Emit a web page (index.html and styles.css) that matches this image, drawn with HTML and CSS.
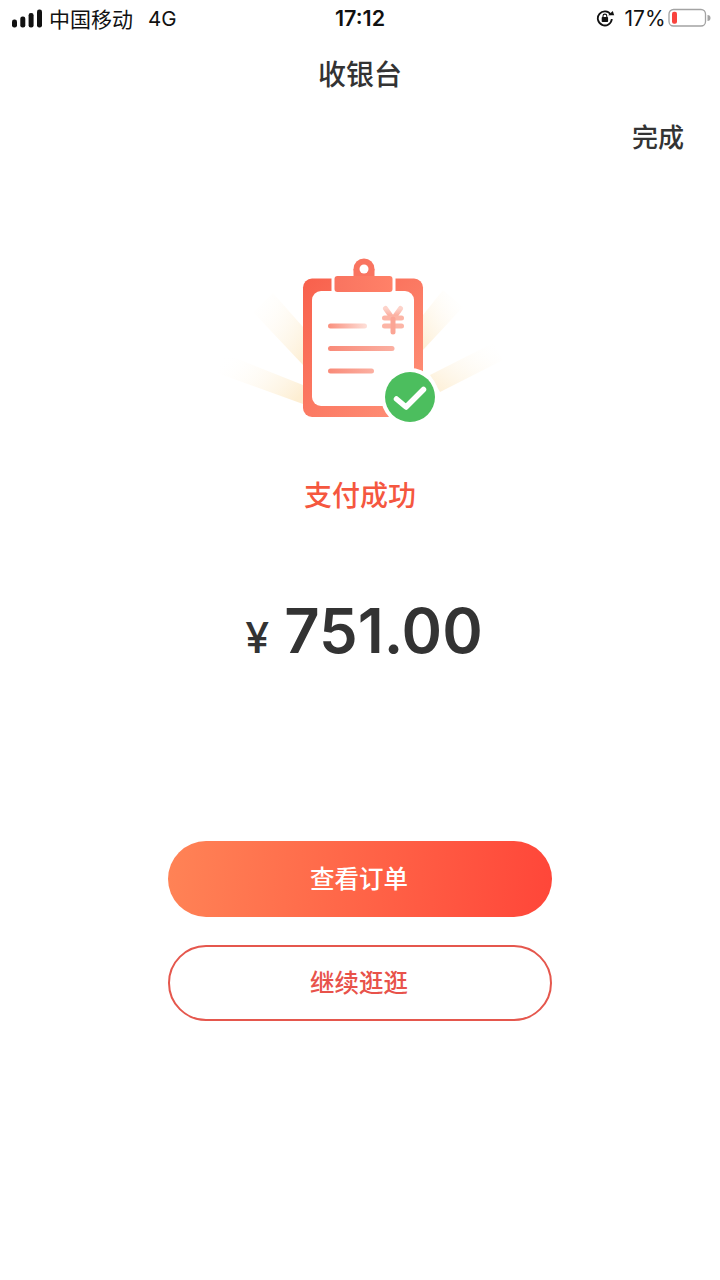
FILE: index.html
```html
<!DOCTYPE html>
<html lang="zh">
<head>
<meta charset="utf-8">
<title>收银台</title>
<link rel="stylesheet" href="styles.css">
</head>
<body>
<div class="page">
  <header class="status">
    <div class="status-left">
      <svg class="signal" width="30" height="19" viewBox="0 0 30 19"><rect x="0" y="10.500" width="5" height="8" rx="2.200"/><rect x="8.300" y="7.500" width="5" height="11" rx="2.200"/><rect x="16.600" y="4" width="5" height="14.500" rx="2.200"/><rect x="25" y="0.500" width="5" height="18" rx="2.200"/></svg>
      <span class="carrier">中国移动</span>
      <span class="net">4G</span>
    </div>
    <div class="status-time">17:12</div>
    <div class="status-right">
      <svg class="lock" width="19" height="18" viewBox="0 0 19 18"><path d="M14.800 5.800A7 7 0 1 0 15.800 10" fill="none" stroke="#111" stroke-width="1.800"/><path d="M12.200 6.300h6L16.800 2z" fill="#111"/><rect x="5.700" y="8" width="6.400" height="5" rx="0.800" fill="#111"/><path d="M7 8.500V7a1.900 1.900 0 0 1 3.800 0v1.500" fill="none" stroke="#111" stroke-width="1.100"/></svg>
      <span class="pct">17%</span>
      <svg class="battery" width="43" height="20" viewBox="0 0 43 20"><rect x="1" y="1.500" width="36.500" height="16.500" rx="4.500" fill="#fff" stroke="#a3a3a3" stroke-width="1.300"/><rect x="4" y="3.800" width="5" height="12" rx="2" fill="#f9433d"/><path d="M39.500 7a3 3 0 0 1 0 6z" fill="#a3a3a3"/></svg>
    </div>
  </header>

  <h1 class="title">收银台</h1>
  <div class="done-row"><span class="done">完成</span></div>

  <div class="illus">
    <svg width="300" height="180" viewBox="0 0 300 180">
      <defs>
        <linearGradient id="rayL1" x1="1" y1="0.800" x2="0" y2="0.200"><stop offset="0" stop-color="#fdeed2"/><stop offset="1" stop-color="#fff" stop-opacity="0"/></linearGradient>
        <linearGradient id="rayL2" x1="1" y1="1" x2="0" y2="0"><stop offset="0" stop-color="#fdeed2"/><stop offset="1" stop-color="#fff" stop-opacity="0"/></linearGradient>
        <linearGradient id="rayR1" x1="0" y1="1" x2="1" y2="0"><stop offset="0" stop-color="#fdeed2"/><stop offset="1" stop-color="#fff" stop-opacity="0"/></linearGradient>
        <linearGradient id="board" x1="0" y1="0" x2="1" y2="1"><stop offset="0" stop-color="#f8604c"/><stop offset="1" stop-color="#ff937a"/></linearGradient>
        <linearGradient id="clip" x1="0" y1="0" x2="1" y2="0"><stop offset="0" stop-color="#f97460"/><stop offset="1" stop-color="#ff8168"/></linearGradient>
        <linearGradient id="line1" x1="0" y1="0" x2="1" y2="0"><stop offset="0" stop-color="#fa8f7d"/><stop offset="1" stop-color="#fde0d9"/></linearGradient>
        <linearGradient id="line2" x1="0" y1="0" x2="1" y2="0"><stop offset="0" stop-color="#f98a78"/><stop offset="1" stop-color="#fbb0a2"/></linearGradient>
        <linearGradient id="yen" x1="0" y1="0" x2="0" y2="1"><stop offset="0" stop-color="#fdd3ca"/><stop offset="1" stop-color="#fb9c8a"/></linearGradient>
      </defs>
      <path d="M93 154 L7 123 L13 103 L93 135z" fill="url(#rayL1)"/>
      <path d="M93 115 L43 62 L63 43 L93 77z" fill="url(#rayL2)"/>
      <path d="M213 100 L253 57 L233 40 L213 65z" fill="url(#rayR1)"/>
      <path d="M220 125 L230 142 L293 110 L283 93z" fill="url(#rayR1)"/>
      <rect x="93" y="28.500" width="120" height="138.500" rx="9" fill="url(#board)"/>
      <rect x="102" y="41" width="102" height="115" rx="9" fill="#fff"/>
      <rect x="121.500" y="24" width="64" height="20" fill="#fff"/>
      <circle cx="154" cy="19" r="10.500" fill="#f97460"/>
      <rect x="143.500" y="19" width="21" height="8" fill="#f97460"/>
      <circle cx="154" cy="19" r="4.500" fill="#fff"/>
      <rect x="124.500" y="26" width="58" height="16" rx="3" fill="url(#clip)"/>
      <rect x="118" y="73.500" width="39" height="5" rx="2.500" fill="url(#line1)"/>
      <rect x="118" y="96" width="66.500" height="5" rx="2.500" fill="url(#line2)"/>
      <rect x="118" y="118.500" width="46" height="5" rx="2.500" fill="url(#line2)"/>
      <path d="M175.500 58.500 L183 69 L190.500 58.500" fill="none" stroke="url(#yen)" stroke-width="5" stroke-linecap="round" stroke-linejoin="round"/>
      <path d="M174.500 68H191.500M174.500 76H191.500" fill="none" stroke="#fcb5a6" stroke-width="5" stroke-linecap="round"/>
      <path d="M183 69V82" fill="none" stroke="#fba595" stroke-width="5" stroke-linecap="round"/>
      <circle cx="200" cy="147" r="29" fill="#fff"/>
      <circle cx="200" cy="147" r="25" fill="#4cbe5e"/>
      <path d="M186.500 149 L196 157 L213.500 139.500" fill="none" stroke="#fff" stroke-width="5.500" stroke-linecap="round" stroke-linejoin="round"/>
    </svg>
  </div>

  <div class="result">支付成功</div>

  <div class="amount"><span class="yen">¥</span><span class="num">751.00</span></div>

  <div class="actions">
    <button class="btn btn-primary">查看订单</button>
    <button class="btn btn-outline">继续逛逛</button>
  </div>
</div>
</body>
</html>
```

FILE: styles.css
```css
* { box-sizing: border-box; }
html, body { margin: 0; padding: 0; background: #fff; }
body {
  width: 720px;
  height: 1280px;
  overflow: hidden;
  font-family: "Liberation Sans", "Noto Sans CJK SC", sans-serif;
  color: #333;
}
.page { display: flex; flex-direction: column; width: 720px; height: 1280px; }

.status {
  height: 36px;
  display: grid;
  grid-template-columns: 1fr auto 1fr;
  align-items: center;
  color: #111;
  font-family: "Noto Sans CJK SC", "Liberation Sans", sans-serif;
  font-size: 21px;
}
.status-left { display: flex; align-items: center; padding-left: 12px; }
.signal { fill: #111; display: block; }
.carrier { margin-left: 7px; line-height: 36px; }
.net { margin-left: 15px; font-family: "Inter", sans-serif; font-size: 20.500px; }
.status-time { font-family: "Inter", sans-serif; font-weight: 600; font-size: 21.500px; }
.status-right { display: flex; align-items: center; justify-content: flex-end; padding-right: 9.500px; }
.lock { display: block; }
.pct { margin-left: 9px; font-family: "Inter", sans-serif; font-size: 21px; }
.battery { display: block; margin-left: 2px; }

.title {
  margin: 17px 0 0;
  height: 40px;
  line-height: 40px;
  text-align: center;
  font-family: "Noto Sans CJK SC", sans-serif;
  font-size: 28px;
  font-weight: 500;
  color: #333;
}
.done-row { display: flex; justify-content: flex-end; padding: 23px 36px 0 0; }
.done {
  font-family: "Noto Sans CJK SC", sans-serif;
  font-size: 26px;
  font-weight: 500;
  line-height: 40px;
  color: #333;
}

.illus { display: flex; justify-content: center; margin-top: 94px; height: 180px; }
.illus svg { display: block; }

.result {
  margin-top: 44px;
  text-align: center;
  font-family: "Noto Sans CJK SC", sans-serif;
  font-size: 28px;
  font-weight: 500;
  line-height: 40px;
  color: #f5573f;
}

.amount {
  margin-top: 81px;
  display: flex;
  justify-content: center;
  align-items: baseline;
  height: 72px;
  line-height: 72px;
  padding-left: 8px;
  font-family: "Inter", "Liberation Sans", sans-serif;
  color: #333;
  font-weight: 600;
}
.yen { font-size: 43px; font-weight: 500; margin-right: 15px; }
.num { font-size: 61.500px; }

.actions { margin-top: 174px; display: flex; flex-direction: column; align-items: center; gap: 28px; }
.btn {
  width: 384px;
  height: 76px;
  border-radius: 38px;
  font-family: "Noto Sans CJK SC", sans-serif;
  font-size: 24.500px;
  font-weight: 500;
  padding: 0 2px 4px 0;
}
.btn-primary { border: 0; color: #fff; background: linear-gradient(95deg, #ff8356 0%, #ff4639 100%); }
.btn-outline { border: 2px solid #e5574d; color: #e8524a; background: #fff; }
```
